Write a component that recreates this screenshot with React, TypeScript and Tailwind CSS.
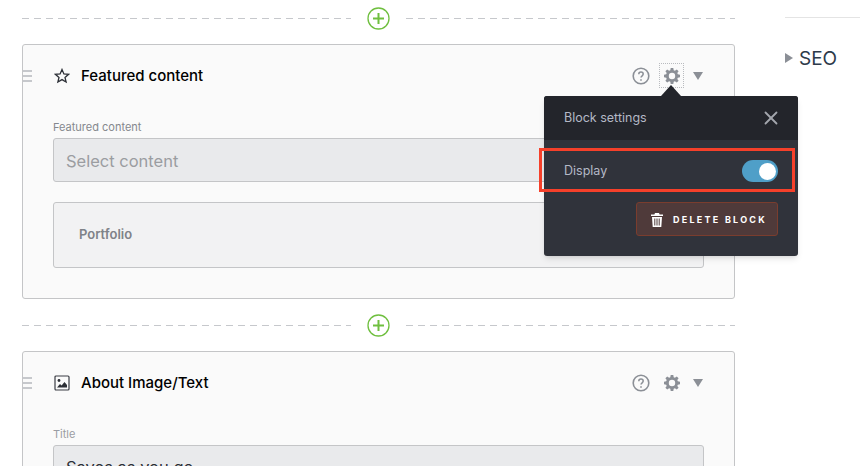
import { X } from "lucide-react";

const font = "[font-family:Inter,'Noto_Sans',sans-serif]";

function DashedLine() {
  return <div className="h-px flex-1 bg-[repeating-linear-gradient(90deg,#c6c8cc_0_7px,transparent_7px_12px)]" />;
}

function AddDivider() {
  return (
    <div className="flex h-[26px] items-center">
      <DashedLine />
      <svg viewBox="0 0 23 23" className="mx-[16px] h-[23px] w-[23px]" fill="none" stroke="#6fbf3f">
        <circle cx="11.5" cy="11.5" r="10.5" strokeWidth="1.3" />
        <path d="M11.5 6v11M6 11.5h11" strokeWidth="2" />
      </svg>
      <DashedLine />
    </div>
  );
}

function Grip() {
  return (
    <div className="flex w-[9px] flex-col gap-[3px]">
      <div className="h-[2px] bg-[#c6c8cc]" />
      <div className="h-[2px] bg-[#c6c8cc]" />
      <div className="h-[2px] bg-[#c6c8cc]" />
    </div>
  );
}

function StarIcon() {
  return (
    <svg viewBox="0 0 16 16" className="h-[16px] w-[16px]" fill="none" stroke="#2c2f36" strokeWidth="1.3">
      <path d="M8 1.5l1.9 4.4 4.7.4-3.6 3.1 1.1 4.6L8 11.6l-4.1 2.4L5 9.4 1.4 6.3l4.7-.4z" />
    </svg>
  );
}

function ImageIcon() {
  return (
    <svg viewBox="0 0 16 16" className="h-[16px] w-[16px]">
      <rect x="1" y="1" width="14" height="14" rx="1" fill="none" stroke="#3a3d44" strokeWidth="1.2" />
      <circle cx="5" cy="5.5" r="1.4" fill="#2c2f36" />
      <path d="M3 12.5l3-3.5 1.6 1.6L10.5 7l2.5 3v2.5z" fill="#2c2f36" />
    </svg>
  );
}

function HelpIcon() {
  return (
    <svg viewBox="0 0 18 18" className="h-[18px] w-[18px]" fill="none" stroke="#8b8f96">
      <circle cx="9" cy="9" r="7.8" strokeWidth="1.6" />
      <path d="M6.8 7.2c0-1.3 1-2.1 2.2-2.1s2.2.8 2.2 2c0 1.7-2.2 1.7-2.2 3.5" strokeWidth="1.5" />
      <path d="M9 12.2v1.6" strokeWidth="1.6" />
    </svg>
  );
}

function GearIcon() {
  return (
    <svg viewBox="0 0 16 16" className="h-[16px] w-[16px]">
      <path
        fillRule="evenodd"
        fill="#8b8f96"
        d="M6.7 0h2.6l.4 2.2 1.2.5L12.8 1.4l1.8 1.8-1.3 1.9.5 1.2 2.2.4v2.6l-2.2.4-.5 1.2 1.3 1.9-1.8 1.8-1.9-1.3-1.2.5-.4 2.2H6.7l-.4-2.2-1.2-.5-1.9 1.3-1.8-1.8 1.3-1.9-.5-1.2L0 9.3V6.7l2.2-.4.5-1.2-1.3-1.9 1.8-1.8 1.9 1.3 1.2-.5zM8 4.800a3.200 3.200 0 100 6.400 3.200 3.200 0 000-6.400z"
      />
    </svg>
  );
}

function TrashIcon() {
  return (
    <svg viewBox="0 0 12 14" className="h-[14px] w-[12px]" fill="#fff">
      <path d="M4 0h4l.6 1.5H12V3H0V1.5h3.400z" />
      <path fillRule="evenodd" d="M1 4h10l-.7 10H1.700zM3.300 5.500v7h1v-7zM5.500 5.500v7h1v-7zM7.700 5.500v7h1v-7z" />
    </svg>
  );
}

function CardHeader({ icon, title, active }: { icon: React.ReactNode; title: string; active?: boolean }) {
  return (
    <div className="flex h-[61px] items-center pr-[31px]">
      <Grip />
      <div className="ml-[22px] flex w-[27px] items-center">{icon}</div>
      <span className="flex-1 pt-[2px] text-[15px] font-medium text-black">{title}</span>
      <HelpIcon />
      <div
        className={`ml-[9px] flex h-[25px] w-[25px] items-center justify-center border border-dotted ${
          active ? "border-[#b9bbbf]" : "border-transparent"
        }`}
      >
        <GearIcon />
      </div>
      <div className="ml-[9px] h-0 w-0 border-x-[5px] border-t-[8px] border-x-transparent border-t-[#8b8f96]" />
    </div>
  );
}

function BlockPopover() {
  return (
    <div className="absolute left-[521px] top-[51px] w-[254px] rounded-[3px] bg-[#30333b] shadow-md">
      <div className="absolute left-[117px] top-[-11px] h-0 w-0 border-x-[10px] border-b-[11px] border-x-transparent border-b-[#23252b]" />
      <div className="flex h-[44px] items-center justify-between rounded-t-[3px] bg-[#23252b] pl-[20px] pr-[16px]">
        <span className="text-[12.5px] text-[#b4b9c6]">Block settings</span>
        <X size={22} strokeWidth={2} className="text-[#a3a6ad]" />
      </div>
      <div className="relative mt-[10px] flex h-[42px] items-center justify-between px-[20px]">
        <span className="text-[12.5px] text-[#b4b9c6]">Display</span>
        <div className="flex h-[22px] w-[36px] items-center justify-end rounded-full bg-[#4f9fc8] pr-[2px]">
          <div className="h-[17px] w-[17px] rounded-full bg-white" />
        </div>
        <div className="absolute -left-[5px] -top-[2px] h-[44px] w-[256px] border-[3px] border-[#f5402a]" />
      </div>
      <div className="flex justify-end pb-[20px] pr-[20px] pt-[10px]">
        <button
          type="button"
          className="flex h-[34px] w-[142px] items-center gap-[10px] rounded-[3px] border border-[#7a3d2e] bg-[#4f3a3a] pl-[14px] pt-px text-[9px] font-bold tracking-[0.25em] text-white"
        >
          <TrashIcon />
          DELETE BLOCK
        </button>
      </div>
    </div>
  );
}

export default function App() {
  return (
    <div className={`flex h-[466px] w-[860px] overflow-hidden bg-white ${font}`}>
      <main className="ml-[22px] w-[713px] shrink-0 pt-[5px]">
        <AddDivider />
        <section className="relative mt-[13px] h-[255px] rounded-[3px] border border-[#c4c5c7] bg-[#fafafa]">
          <CardHeader icon={<StarIcon />} title="Featured content" active />
          <div className="px-[30px] pt-[13px]">
            <label className="mb-[3px] block text-[11px] leading-[16px] text-[#85888e]">Featured content</label>
            <div className="flex h-[44px] items-center rounded-[3px] border border-[#c4c5c7] bg-[#e9eaec] pl-[12px] pt-[2px] text-[16.5px] text-[#9b9da1]">
              Select content
            </div>
            <div className="mt-[20px] flex h-[66px] items-center rounded-[3px] border border-[#c4c5c7] bg-[#f2f2f3] pl-[25px] text-[13px] font-semibold text-[#7f8288]">
              Portfolio
            </div>
          </div>
          <BlockPopover />
        </section>
        <div className="mt-[13px]">
          <AddDivider />
        </div>
        <section className="mt-[13px] h-[200px] rounded-t-[3px] border border-[#c4c5c7] bg-[#fafafa]">
          <CardHeader icon={<ImageIcon />} title="About Image/Text" />
          <div className="px-[30px] pt-[13px]">
            <label className="mb-[3px] block text-[11px] leading-[16px] text-[#9a9da3]">Title</label>
            <div className="flex h-[44px] items-center rounded-[3px] border border-[#c4c5c7] bg-[#e9eaec] pl-[12px] text-[16.5px] text-[#2c2f36]">
              Saves as you go
            </div>
          </div>
        </section>
      </main>
      <aside className="ml-[50px] flex-1 pt-[17px]">
        <div className="border-t border-[#e4e4e4]" />
        <div className="mt-[29px] flex items-center gap-[6px]">
          <div className="mb-[2px] h-0 w-0 border-y-[5px] border-l-[8px] border-y-transparent border-l-[#8b8f96]" />
          <span className="text-[19px] leading-[24px] text-[#2d3a4a]">SEO</span>
        </div>
      </aside>
    </div>
  );
}
